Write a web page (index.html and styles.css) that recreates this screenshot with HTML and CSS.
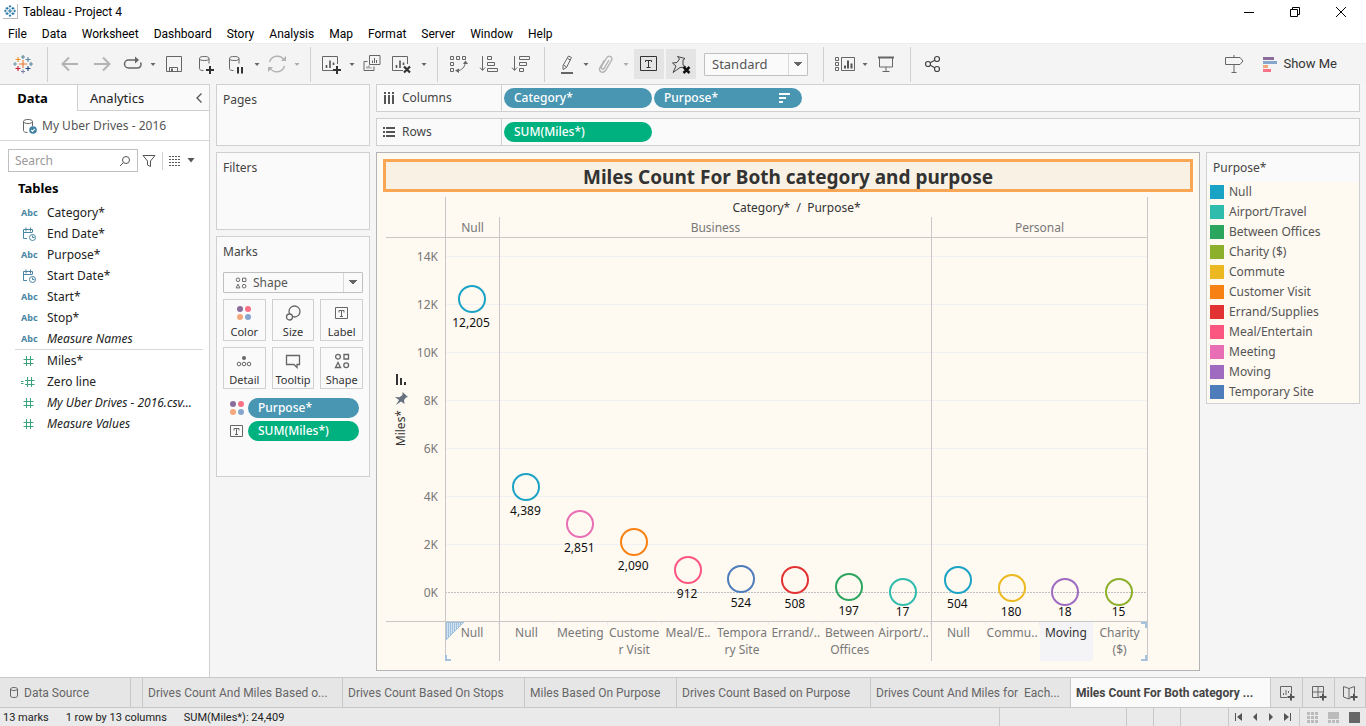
FILE: index.html
```html
<!DOCTYPE html>
<html lang="en">
<head>
<meta charset="utf-8">
<title>Tableau - Project 4</title>
<link rel="stylesheet" href="styles.css">
</head>
<body>
<svg class="defs" aria-hidden="true">
  <symbol id="i-logo" viewBox="0 0 24 24"><g fill="none" stroke-width="1.1">
    <path stroke="#e8762c" d="M12 8v8M8 12h8"/><path stroke="#59879b" d="M12 3v4M10 5h4M18 12h4M20 10v4"/><path stroke="#7099a6" d="M2 12h4M4 10v4"/>
    <path stroke="#eb912b" d="M7 5v5M4.500 7.500h5"/><path stroke="#59879b" d="M17 5v5M14.500 7.500h5"/><path stroke="#c72035" d="M7 14v5M4.500 16.500h5"/><path stroke="#1f447e" d="M17 14v5M14.500 16.500h5"/><path stroke="#7b7fa0" d="M12 17.500v4M10 19.500h4"/></g></symbol>
  <symbol id="i-logo-blue" viewBox="0 0 24 24"><path fill="none" stroke="#2e7ba8" stroke-width="2" d="M12 8v8M8 12h8M12 2v4M10 4h4M12 18v4M10 20h4M2 12h4M4 10v4M18 12h4M20 10v4M7 5v5M4.500 7.500h5M17 5v5M14.500 7.500h5M7 14v5M4.500 16.500h5M17 14v5M14.500 16.500h5"/></symbol>
  <symbol id="i-back" viewBox="0 0 24 24"><path class="faint thick" d="M19 12H4M10 5.500L3.500 12l6.500 6.500"/></symbol>
  <symbol id="i-fwd" viewBox="0 0 24 24"><path class="faint thick" d="M3 12h15M12 5.500l6.500 6.500-6.500 6.500"/></symbol>
  <symbol id="i-redo" viewBox="0 0 24 24"><path class="ln" stroke-width="1.500" d="M13 8H7.500a4 4 0 0 0 0 8h9a3.500 3.500 0 0 0 3-5.500M12 8h5"/><path fill="#666" d="M14 4.500l4 3.500-4 3.500z"/></symbol>
  <symbol id="i-caret" viewBox="0 0 12 24"><path fill="#666" d="M3.500 11h5L6 14z"/></symbol>
  <symbol id="i-save" viewBox="0 0 24 24"><path class="ln" d="M3.500 4.500h15v15h-15zM6.500 19.500v-4h8v4"/><path fill="#666" d="M8 16.500h2v3H8z"/></symbol>
  <symbol id="i-db" viewBox="0 0 24 24"><path class="ln" d="M4.500 6.500c0-1.500 2-2 4.700-2s4.800.5 4.800 2-2 2-4.800 2-4.700-.5-4.700-2zM4.500 6.500v10c0 1.500 1.500 2 4 2M14 6.500v5"/></symbol>
  <symbol id="i-newdata" viewBox="0 0 24 24"><use href="#i-db"/><path stroke="#333" stroke-width="2" d="M15 14v8M11 18h8"/></symbol>
  <symbol id="i-pause" viewBox="0 0 24 24"><use href="#i-db"/><path stroke="#333" stroke-width="2" d="M13 15v6.500M17 15v6.500"/></symbol>
  <symbol id="i-refresh" viewBox="0 0 24 24"><path class="faint" d="M4.500 10A8 8 0 0 1 19 8M19.500 14A8 8 0 0 1 5 16"/><path fill="#b3b3b3" d="M16 9h5v-5zM8 15H3v5z"/></symbol>
  <symbol id="i-sheet" viewBox="0 0 24 24"><path class="ln" d="M13 18.500H2.500v-14h15V12"/><path stroke="#555" stroke-width="1.600" d="M6.500 16v-3M10 16V8.500M13.500 13v-2.500"/></symbol>
  <symbol id="i-newsheet" viewBox="0 0 24 24"><use href="#i-sheet"/><path stroke="#333" stroke-width="2" d="M17 14v8M13 18h8"/></symbol>
  <symbol id="i-dup" viewBox="0 0 24 24"><path class="ln" d="M9.500 3.500h10.500v9H9.500zM7.500 9.500H4v9h10v-4M12.500 11V8.500M14.500 11V6M16.500 11V8M7 16.500v-2M9 16.500v-3M11 16.500v-1"/></symbol>
  <symbol id="i-clear" viewBox="0 0 24 24"><use href="#i-sheet"/><path stroke="#333" stroke-width="2.200" d="M14 14.500l6 6M20 14.500l-6 6"/></symbol>
  <symbol id="i-swap" viewBox="0 0 24 24"><path class="ln" d="M3.500 4.500h3v3h-3zM9.500 4.500h3v3h-3zM15.500 4.500h3v3h-3zM3.500 10.500h3v3h-3zM3.500 16.500h3v3h-3zM18 11c0 4-3 7-8 8"/><path fill="#666" d="M18.500 8.500l2.500 3.500h-5zM8 18.500l4-2v4.500z"/></symbol>
  <symbol id="i-asc" viewBox="0 0 24 24"><path class="ln" d="M5.500 4v14M3 15.500l2.500 3 2.500-3M10.500 4.500h4v3h-4zM10.500 10.500h7v3h-7zM10.500 16.500h10v3h-10z"/></symbol>
  <symbol id="i-desc" viewBox="0 0 24 24"><path class="ln" d="M5.500 4v14M3 15.500l2.500 3 2.500-3M10.500 4.500h10v3h-10zM10.500 10.500h7v3h-7zM10.500 16.500h4v3h-4z"/></symbol>
  <symbol id="i-pen" viewBox="0 0 24 24"><path class="ln" d="M14.500 4l3 1.500-5 10L9 17.500v-4zM9.500 13l3 2M13.500 6.500l3 1.500"/><path stroke="#666" stroke-width="2" d="M7 21h12"/></symbol>
  <symbol id="i-clip" viewBox="0 0 24 24"><path class="faint" d="M15 8l-5 8.500c-1.500 1.500-3.500 0-2.500-2l5-8.500c2-3.500 7-1 5 2.500l-6 10c-2.500 3.500-7.500 1-5.500-3l4.500-7.500"/></symbol>
  <symbol id="i-text" viewBox="0 0 24 24"><path fill="none" stroke="#333" d="M3.500 4.500h16v14h-16zM8.500 10V8.500h6V10M11.500 8v7M9.500 15.500h4"/></symbol>
  <symbol id="i-pinx" viewBox="0 0 24 24"><path fill="none" stroke="#444" d="M8.500 4.500l7.500 2-2 1.500v5l3 2-6 .5L4 20.500l3-6.500-3.500-3 4.500-.5 2.500-3.500z"/><path stroke="#111" stroke-width="2.500" d="M14.500 15l6 6M20.500 15l-6 6"/></symbol>
  <symbol id="i-cards" viewBox="0 0 24 24"><path class="ln" d="M2.500 5.500h3v3h-3zM2.500 10.500h3v3h-3zM2.500 15.500h3v3h-3zM8.500 5.500h13v13h-13z"/><path stroke="#555" stroke-width="2" d="M12 16.500v-3M15 16.500v-8M18.500 16.500v-5"/></symbol>
  <symbol id="i-present" viewBox="0 0 24 24"><path class="ln" d="M4.500 6v9h13V6M11 15v5M7.500 19.500h7"/><path stroke="#666" stroke-width="2" d="M3 5.500h16"/></symbol>
  <symbol id="i-share" viewBox="0 0 24 24"><g fill="none" stroke="#444" stroke-width="1.200"><circle cx="8" cy="12" r="2.500"/><circle cx="17" cy="7" r="2.500"/><circle cx="17" cy="17" r="2.500"/><path d="M10.200 10.800l4.500-2.500M10.200 13.200l4.500 2.500"/></g></symbol>
  <symbol id="i-sign" viewBox="0 0 24 24"><path class="ln" d="M2.500 5.500h14.500l3 3.500-3 3.500H2.500zM11 3v2.500M11 12.500v8M8.500 20.500h5"/></symbol>
  <symbol id="i-dots" viewBox="0 0 16 16"><circle cx="4" cy="4" r="3" fill="#8a6d9b"/><circle cx="12" cy="4" r="3" fill="#fa7286"/><circle cx="4" cy="12" r="3" fill="#f5a77c"/><circle cx="12" cy="12" r="3" fill="#86a6ce"/></symbol>
  <symbol id="i-shapes" viewBox="0 0 16 16"><path class="ln" stroke-width="1.300" d="M10 1.500h4.500V6H10zM4 9.500L1.500 14.500h5z"/><g class="ln" stroke-width="1.300"><circle cx="4" cy="3.700" r="2.400"/><circle cx="12.200" cy="12.200" r="2.400"/></g></symbol>
  <symbol id="i-size" viewBox="0 0 16 16"><circle class="ln" stroke-width="1.300" cx="9.500" cy="6.500" r="5.500"/><circle cx="4.500" cy="12" r="3" fill="#fafafa" stroke="#666" stroke-width="1.300"/></symbol>
  <symbol id="i-label" viewBox="0 0 16 16"><path class="ln" d="M1.500 2.500h12v11h-12zM5 7.500v-2h5v2M7.500 5.500v6M6 11.500h3"/></symbol>
  <symbol id="i-detail" viewBox="0 0 16 16"><circle cx="8" cy="5" r="2" fill="#666"/><g class="ln"><circle cx="3" cy="11" r="1.800"/><circle cx="8" cy="11" r="1.800"/><circle cx="13" cy="11" r="1.800"/></g></symbol>
  <symbol id="i-tooltip" viewBox="0 0 16 16"><path class="ln" stroke-width="1.300" d="M1.500 2.500h13v9h-2.500v3l-3-3H1.500z"/></symbol>
  <symbol id="i-date" viewBox="0 0 16 16"><g fill="none" stroke="#4a86a4"><path d="M6 12.500H2.500v-9h9V6M2.500 6.500h9M5 1.500v4M9.500 1.500v4"/><circle cx="11.500" cy="11.500" r="3"/><path d="M11.500 9.500v2h2"/></g></symbol>
  <symbol id="i-hash" viewBox="0 0 16 16"><path stroke="#3da37c" d="M5.500 3v10M9.500 3v10M2.500 6.500h10M2.500 10.500h10"/></symbol>
  <symbol id="i-eqhash" viewBox="0 0 16 16"><path stroke="#3da37c" d="M6.500 3v10M10.500 3v10M4 6.500h9.500M4 10.500h9.500M0 7.500h2.500M0 9.500h2.500"/></symbol>
  <symbol id="i-plus" viewBox="0 0 16 16"><path stroke="#555" stroke-width="2" d="M12 8.500v7M8.500 12h7"/></symbol>
</svg>

<div class="app">
  <header class="titlebar">
    <span class="app-icon"><svg width="14" height="14"><use href="#i-logo-blue"/></svg></span>
    <h1>Tableau - Project 4</h1>
    <div class="window-buttons">
      <button aria-label="Minimize"><svg width="12" height="12"><path stroke="#000" d="M1 6.500h10"/></svg></button>
      <button aria-label="Restore"><svg width="12" height="12"><path fill="none" stroke="#000" d="M1.500 3.500h7v7h-7zM3.500 3.500v-2h7v7h-2"/></svg></button>
      <button aria-label="Close"><svg width="12" height="12"><path stroke="#000" d="M1 1l10 10M11 1L1 11"/></svg></button>
    </div>
  </header>
  <nav class="menubar" aria-label="Main menu">
    <button>File</button><button>Data</button><button>Worksheet</button><button>Dashboard</button><button>Story</button><button>Analysis</button><button>Map</button><button>Format</button><button>Server</button><button>Window</button><button>Help</button>
  </nav>

  <div class="toolbar" role="toolbar" aria-label="Worksheet toolbar">
    <button class="tool home" aria-label="Start page"><svg><use href="#i-logo"/></svg></button>
    <span class="rule"></span>
    <button class="tool wide" aria-label="Undo"><svg><use href="#i-back"/></svg></button>
    <button class="tool wide" aria-label="Redo"><svg><use href="#i-fwd"/></svg></button>
    <button class="tool" aria-label="Replay"><svg><use href="#i-redo"/></svg></button>
    <button class="drop" aria-label="Replay options"><svg><use href="#i-caret"/></svg></button>
    <button class="tool wide" aria-label="Save"><svg><use href="#i-save"/></svg></button>
    <button class="tool wide" aria-label="New data source"><svg><use href="#i-newdata"/></svg></button>
    <button class="tool" aria-label="Pause updates"><svg><use href="#i-pause"/></svg></button>
    <button class="drop" aria-label="Update options"><svg><use href="#i-caret"/></svg></button>
    <button class="tool" aria-label="Run update"><svg><use href="#i-refresh"/></svg></button>
    <button class="drop off" aria-label="Run options"><svg><use href="#i-caret"/></svg></button>
    <span class="rule"></span>
    <button class="tool" aria-label="New worksheet"><svg><use href="#i-newsheet"/></svg></button>
    <button class="drop" aria-label="New worksheet options"><svg><use href="#i-caret"/></svg></button>
    <button class="tool" aria-label="Duplicate"><svg><use href="#i-dup"/></svg></button>
    <button class="tool wide" aria-label="Clear sheet"><svg><use href="#i-clear"/></svg></button>
    <button class="drop" aria-label="Clear options"><svg><use href="#i-caret"/></svg></button>
    <span class="rule"></span>
    <button class="tool" aria-label="Swap rows and columns"><svg><use href="#i-swap"/></svg></button>
    <button class="tool wide" aria-label="Sort ascending"><svg><use href="#i-asc"/></svg></button>
    <button class="tool wide" aria-label="Sort descending"><svg><use href="#i-desc"/></svg></button>
    <span class="rule"></span>
    <button class="tool" aria-label="Highlight"><svg><use href="#i-pen"/></svg></button>
    <button class="drop" aria-label="Highlight options"><svg><use href="#i-caret"/></svg></button>
    <button class="tool" aria-label="Group members"><svg><use href="#i-clip"/></svg></button>
    <button class="drop off" aria-label="Group options"><svg><use href="#i-caret"/></svg></button>
    <button class="tool on" aria-label="Show mark labels"><svg><use href="#i-text"/></svg></button>
    <button class="tool on" aria-label="Fix axes"><svg><use href="#i-pinx"/></svg></button>
    <span class="picker fit"><select aria-label="Fit"><option>Standard</option></select></span>
    <span class="rule"></span>
    <button class="tool" aria-label="Show cards"><svg><use href="#i-cards"/></svg></button>
    <button class="drop" aria-label="Card options"><svg><use href="#i-caret"/></svg></button>
    <button class="tool wide" aria-label="Presentation mode"><svg><use href="#i-present"/></svg></button>
    <span class="rule"></span>
    <button class="tool" aria-label="Share"><svg><use href="#i-share"/></svg></button>
    <button class="tool wide guide" aria-label="Guide"><svg><use href="#i-sign"/></svg></button>
    <button class="show-me"><svg width="14" height="15"><path fill="#8a6d9b" d="M0 0h11v3H0z"/><path fill="#86a6ce" d="M0 4h14v3H0z"/><path fill="#f5a77c" d="M0 8h5v3H0z"/><path fill="#fa7286" d="M0 12h8v3H0z"/></svg>Show Me</button>
  </div>

  <main class="workspace">
    <aside class="data-pane">
      <div class="pane-tabs">
        <button class="pane-tab current">Data</button>
        <button class="pane-tab">Analytics</button>
        <button class="collapse" aria-label="Collapse pane"><svg width="8" height="12"><path fill="none" stroke="#555" stroke-width="1.300" d="M6.500 1.500L2 6l4.500 4.500"/></svg></button>
      </div>
      <a class="source" href="#source">
        <svg width="16" height="16" viewBox="0 0 16 16"><path class="ln" d="M1.500 3.500c0-1.300 2-2 4.500-2s4.500.7 4.500 2-2 2-4.500 2-4.500-.7-4.500-2zM1.500 3.500v9c0 1.300 1.500 2 4 2M10.500 3.500V8"/><circle cx="11" cy="12" r="3.800" fill="#3c7fa3"/><path fill="none" stroke="#fff" stroke-width="1.200" d="M9.200 12l1.300 1.400 2.300-2.600"/></svg>
        My Uber Drives - 2016</a>
      <div class="search-row">
        <label class="search"><input type="text" placeholder="Search" aria-label="Search fields"><svg width="12" height="12"><g fill="none" stroke="#555"><circle cx="7" cy="5" r="3.500"/><path d="M4.500 7.500L1 11"/></g></svg></label>
        <button class="mini" aria-label="Filter fields"><svg width="14" height="14"><path fill="none" stroke="#555" d="M1 1.500h12L8.500 7v5.500l-3-1.500V7z"/></svg></button>
        <span class="mini-rule"></span>
        <button class="mini" aria-label="View fields"><svg width="12" height="10"><path stroke="#555" stroke-dasharray="2 1" d="M0 .5h12M0 3.500h12M0 6.500h12M0 9.500h12"/></svg></button>
        <button class="mini" aria-label="Field options"><svg width="8" height="5"><path fill="#555" d="M.5 0h7L4 4.500z"/></svg></button>
      </div>
      <h2>Tables</h2>
      <ul class="fields dimensions">
        <li><span class="abc">Abc</span>Category*</li>
        <li><svg><use href="#i-date"/></svg>End Date*</li>
        <li><span class="abc">Abc</span>Purpose*</li>
        <li><svg><use href="#i-date"/></svg>Start Date*</li>
        <li><span class="abc">Abc</span>Start*</li>
        <li><span class="abc">Abc</span>Stop*</li>
        <li><span class="abc">Abc</span><em>Measure Names</em></li>
      </ul>
      <ul class="fields">
        <li><svg><use href="#i-hash"/></svg>Miles*</li>
        <li><svg><use href="#i-eqhash"/></svg>Zero line</li>
        <li><svg><use href="#i-hash"/></svg><em>My Uber Drives - 2016.csv...</em></li>
        <li><svg><use href="#i-hash"/></svg><em>Measure Values</em></li>
      </ul>
    </aside>

    <div class="cards">
      <section class="card pages"><h3>Pages</h3></section>
      <section class="card filters"><h3>Filters</h3></section>
      <section class="card marks">
        <h3>Marks</h3>
        <div class="picker mark-type"><svg width="12" height="12"><use href="#i-shapes"/></svg><select aria-label="Mark type"><option>Shape</option></select></div>
        <div class="mark-buttons">
          <button><svg><use href="#i-dots"/></svg>Color</button>
          <button><svg><use href="#i-size"/></svg>Size</button>
          <button><svg><use href="#i-label"/></svg>Label</button>
          <button><svg><use href="#i-detail"/></svg>Detail</button>
          <button><svg><use href="#i-tooltip"/></svg>Tooltip</button>
          <button><svg><use href="#i-shapes"/></svg>Shape</button>
        </div>
        <div class="encoding"><svg><use href="#i-dots"/></svg><button class="pill blue">Purpose*</button></div>
        <div class="encoding"><svg><use href="#i-label"/></svg><button class="pill green">SUM(Miles*)</button></div>
      </section>
    </div>

    <div class="sheet">
      <div class="shelf">
        <div class="shelf-name"><svg width="12" height="12"><path stroke="#555" stroke-width="2" d="M2 0v2M6 0v2M10 0v2M2 3v9M6 3v9M10 3v9"/></svg>Columns</div>
        <button class="pill blue">Category*</button>
        <button class="pill blue">Purpose*<svg width="11" height="10"><path fill="#fff" d="M0 0h11v2H0zM0 4h7v2H0zM0 8h4v2H0z"/></svg></button>
      </div>
      <div class="shelf">
        <div class="shelf-name"><svg width="12" height="12"><path stroke="#555" stroke-width="2" d="M0 2h2M0 6h2M0 10h2M3 2h9M3 6h9M3 10h9"/></svg>Rows</div>
        <button class="pill green">SUM(Miles*)</button>
      </div>
      <div class="view-row">
        <section class="viz">
          <h2 class="viz-title">Miles Count For Both category and purpose</h2>
          <div class="chart">
            <div class="field-title">Category* &nbsp;/&nbsp; Purpose*</div>
            <div class="head corner"></div>
            <div class="head g1">Null</div>
            <div class="head g2">Business</div>
            <div class="head g3">Personal</div>
            <div class="axis">
              <span class="tick" style="--v:14000">14K</span><span class="tick" style="--v:12000">12K</span><span class="tick" style="--v:10000">10K</span><span class="tick" style="--v:8000">8K</span><span class="tick" style="--v:6000">6K</span><span class="tick" style="--v:4000">4K</span><span class="tick" style="--v:2000">2K</span><span class="tick" style="--v:0">0K</span>
              <div class="axis-title">
                <div class="axis-icons">
                  <svg width="12" height="11"><path fill="#333" d="M1 0h2v11H1zM5 4h2v7H5zM9 8h2v3H9z"/></svg>
                  <svg width="13" height="13"><path fill="#66707e" d="M7.500 0L13 5l-2 .5L9 8l.5 4L6 9.500 1 13l3-5L0 5l4.500.3L7.500 3z"/></svg>
                </div>
                <span class="axis-name">Miles*</span>
              </div>
            </div>
            <div class="gridlines"><i style="--v:14000"></i><i style="--v:12000"></i><i style="--v:10000"></i><i style="--v:8000"></i><i style="--v:6000"></i><i style="--v:4000"></i><i style="--v:2000"></i><i class="zero" style="--v:0"></i></div>
            <div class="pane g1">
              <div class="col null" style="--v:12205"><b></b><span>12,205</span></div>
            </div>
            <div class="pane g2">
              <div class="col null" style="--v:4389"><b></b><span>4,389</span></div>
              <div class="col meeting" style="--v:2851"><b></b><span>2,851</span></div>
              <div class="col customer" style="--v:2090"><b></b><span>2,090</span></div>
              <div class="col meal" style="--v:912"><b></b><span>912</span></div>
              <div class="col temporary" style="--v:524"><b></b><span>524</span></div>
              <div class="col errand" style="--v:508"><b></b><span>508</span></div>
              <div class="col between" style="--v:197"><b></b><span>197</span></div>
              <div class="col airport" style="--v:17"><b></b><span>17</span></div>
            </div>
            <div class="pane g3">
              <div class="col null" style="--v:504"><b></b><span>504</span></div>
              <div class="col commute" style="--v:180"><b></b><span>180</span></div>
              <div class="col moving" style="--v:18"><b></b><span>18</span></div>
              <div class="col charity" style="--v:15"><b></b><span>15</span></div>
            </div>
            <div class="foot corner"></div>
            <div class="foot g1"><span>Null</span><svg class="hatch" width="18" height="18"><path fill="#d3e3f0" d="M0 0h18L0 18z"/><path stroke="#9fc1dd" stroke-width="1" d="M.5 0v18M2.500 0v16M4.500 0v14M6.500 0v12M8.500 0v10M10.500 0v8M12.500 0v6M14.500 0v4M16.500 0v2M0 .5h18M18 0L0 18"/></svg><i class="mark-corner bl"></i></div>
            <div class="foot g2"><span>Null</span><span>Meeting</span><span>Custome<br>r Visit</span><span>Meal/E..</span><span>Tempora<br>ry Site</span><span>Errand/..</span><span>Between<br>Offices</span><span>Airport/..</span></div>
            <div class="foot g3"><span>Null</span><span>Commu..</span><span class="hover">Moving</span><span>Charity<br>($)</span><i class="mark-corner tr"></i><i class="mark-corner br"></i></div>
          </div>
        </section>
        <aside class="legend">
          <h3>Purpose*</h3>
          <ul>
            <li class="null">Null</li><li class="airport">Airport/Travel</li><li class="between">Between Offices</li><li class="charity">Charity ($)</li><li class="commute">Commute</li><li class="customer">Customer Visit</li><li class="errand">Errand/Supplies</li><li class="meal">Meal/Entertain</li><li class="meeting">Meeting</li><li class="moving">Moving</li><li class="temporary">Temporary Site</li>
          </ul>
        </aside>
      </div>
    </div>
  </main>

  <nav class="sheet-tabs" aria-label="Sheets">
    <button class="source-tab"><svg width="10" height="13"><path class="ln" d="M1.500 3c0-2 7-2 7 0v7c0 2-7 2-7 0zM1.500 3c0 2 7 2 7 0"/></svg>Data Source</button>
    <span></span>
    <button>Drives Count And Miles Based o...</button>
    <button>Drives Count Based On Stops</button>
    <button>Miles Based On Purpose</button>
    <button>Drives Count Based on Purpose</button>
    <button>Drives Count And Miles for&nbsp; Each...</button>
    <button class="current">Miles Count For Both category ...</button>
    <button class="add" aria-label="New worksheet"><svg width="16" height="16"><path class="ln" d="M8 12.500H1.500v-11h11V8M4.500 10V8M7 10V5M9.500 8V6"/><use href="#i-plus"/></svg></button>
    <button class="add" aria-label="New dashboard"><svg width="16" height="16"><path class="ln" d="M8 12.500H1.500v-11h11V8M1.500 7h11M7 1.500v11"/><use href="#i-plus"/></svg></button>
    <button class="add" aria-label="New story"><svg width="16" height="16"><path class="ln" d="M9 12.500L7 14l-5.500-2V1.500L7 3.500l5.500-2V8M7 3.500V14"/><use href="#i-plus"/></svg></button>
  </nav>
  <footer class="status">
    <span>13 marks</span><span>1 row by 13 columns</span><span>SUM(Miles*): 24,409</span>
    <i class="cell c127"></i><i class="cell c27"></i><i class="cell c27"></i><i class="cell c48"></i>
    <div class="cell pager">
      <button aria-label="First"><svg width="8" height="8"><path fill="#555" d="M0 0h1v8H0zM7 0v8L2 4z"/></svg></button>
      <button aria-label="Previous"><svg width="8" height="8"><path fill="#555" d="M6 0v8L2 4z"/></svg></button>
      <button aria-label="Next"><svg width="8" height="8"><path fill="#555" d="M2 0v8l4-4z"/></svg></button>
      <button aria-label="Last"><svg width="8" height="8"><path fill="#555" d="M7 0h1v8H7zM1 0v8l5-4z"/></svg></button>
    </div>
    <div class="cell layouts">
      <button aria-label="Sheet sorter"><svg width="11" height="11"><path fill="#bbb" d="M0 0h3v3H0zM4 0h3v3H4zM8 0h3v3H8zM0 4h3v3H0zM4 4h3v3H4zM8 4h3v3H8zM0 8h3v3H0zM4 8h3v3H4zM8 8h3v3H8z"/></svg></button>
      <button aria-label="Filmstrip"><svg width="11" height="11"><path fill="#bbb" d="M0 0h11v7H0zM0 8h3v3H0zM4 8h3v3H4zM8 8h3v3H8z"/></svg></button>
      <button aria-label="Tabs"><svg width="11" height="11"><path fill="#666" d="M0 0h11v11H0z"/></svg></button>
    </div>
  </footer>
</div>
</body>
</html>
```
FILE: styles.css
```css
* { box-sizing: border-box; }
body { margin: 0; font: 12px/16px "Noto Sans", "Open Sans", sans-serif; color: #333; background: #f5f5f5; }
h1, h2, h3, ul { margin: 0; padding: 0; font-weight: 400; font-size: 12px; list-style: none; }
button { margin: 0; padding: 0; border: 0; background: none; font: inherit; color: inherit; }
svg { display: block; flex: none; }
.defs { position: absolute; width: 0; height: 0; }
.ln { fill: none; stroke: #666; }
.faint { fill: none; stroke: #b3b3b3; stroke-width: 1.4; }
.faint.thick { stroke-width: 2; }

/* category palette */
.null { --c: #1ba3c6; }
.airport { --c: #30bcad; }
.between { --c: #2ca65f; }
.charity { --c: #8cb02c; }
.commute { --c: #edb922; }
.customer { --c: #f88113; }
.errand { --c: #e33233; }
.meal { --c: #fb567f; }
.meeting { --c: #e86fb5; }
.moving { --c: #9f6bc1; }
.temporary { --c: #4f7cba; }

.app { display: flex; flex-direction: column; min-height: 100vh; }
.titlebar { display: flex; align-items: center; height: 23px; padding: 0 2px 0 3px; background: #fff; color: #000; gap: 5px; }
.titlebar h1 { flex: 1; font-family: Roboto, sans-serif; }
.app-icon { border: solid #bbb; border-width: 0 1px 1px 0; }
.window-buttons { display: flex; }
.window-buttons button { width: 46px; height: 20px; display: grid; place-items: center; }
.menubar { display: flex; gap: 15px; height: 20px; padding: 3px 8px 1px; background: #fff; font-family: Roboto, sans-serif; color: #000; }

.toolbar { display: flex; align-items: center; height: 41px; border-top: 1px solid #ededed; background: #f4f4f4; }
.tool { display: grid; place-items: center; width: 28px; height: 30px; }
.tool.wide { width: 32px; }
.tool.home { width: 40px; padding-left: 6px; }
.tool.on { width: 30px; background: #e4e4e4; margin-left: 2px; }
.tool svg { width: 24px; height: 24px; }
.drop svg { width: 12px; height: 24px; }
.drop.off { opacity: .5; }
.rule { width: 1px; height: 35px; margin: 0 7px; background: #d0d0d0; }
.guide { margin-left: auto; }
.show-me { display: flex; align-items: center; gap: 6px; margin: 0 29px 0 12px; font: 13px/18px Roboto, sans-serif; }
.picker { display: flex; align-items: center; border: 1px solid #c0c0c0; border-radius: 1px; background: #fafafa; }
.picker select { flex: 1; width: 100%; height: 100%; border: 0; background: none; appearance: none; font: inherit; color: #555; outline: 0; }
.picker::after { content: ""; width: 18px; align-self: stretch; border-left: 1px solid #d8d8d8; background: conic-gradient(from -39deg at 50% 100%, #666 78deg, transparent 0) center / 8px 5px no-repeat; }
.fit { width: 104px; height: 23px; margin: 0 8px; font: 13px/18px "Noto Sans", sans-serif; }
.fit select { padding: 0 0 0 7px; }

.workspace { flex: 1; display: flex; gap: 6px; padding-right: 6px; }

.data-pane { width: 210px; border: solid #d0d0d0; border-width: 1px 1px 0 0; background: #fff; color: #222; }
.pane-tabs { display: flex; height: 26px; font-size: 13px; }
.pane-tab { padding: 0 12px; border-bottom: 1px solid #d0d0d0; background: #fafafa; color: #222; }
.pane-tab.current { width: 78px; padding: 0 12px 0 0; border-right: 1px solid #d0d0d0; border-bottom: 0; background: #fff; font-weight: 700; color: #000; }
.collapse { flex: 1; display: flex; justify-content: flex-end; align-items: center; padding-right: 6px; border-bottom: 1px solid #d0d0d0; background: #fafafa; }
.source { display: flex; align-items: center; gap: 4px; height: 30px; padding-left: 22px; border-bottom: 1px solid #d8d8d8; color: #555; text-decoration: none; }
.search-row { display: flex; align-items: center; gap: 4px; margin: 8px 8px 0; }
.search { flex: none; display: flex; align-items: center; width: 130px; height: 23px; padding: 0 6px; border: 1px solid #c0c0c0; }
.search input { flex: 1; width: 0; border: 0; padding: 0; outline: 0; font: inherit; background: none; }
.search input::placeholder { color: #999; }
.mini-rule { width: 1px; height: 18px; background: #d0d0d0; margin-right: 2px; }
.mini { margin-right: 2px; }
.data-pane h2 { margin: 8px 0 6px 18px; font-weight: 700; font-size: 13px; color: #000; }
.fields { padding: 0 0 0 21px; }
.dimensions::after { content: ""; display: block; height: 1px; margin: 0 6px 0 -6px; background: #d8d8d8; }
.fields li { display: flex; align-items: center; height: 21px; white-space: nowrap; }
.fields svg { width: 16px; height: 16px; margin-right: 10px; }
.abc { width: 26px; font: 700 9px/12px "Noto Sans", sans-serif; color: #4a86a4; }

.cards { display: flex; flex-direction: column; gap: 6px; width: 154px; }
.card { border: 1px solid #d0d0d0; background: #fafafa; padding: 7px 6px; }
.card h3 { color: #444; }
.pages { height: 62px; }
.filters { height: 78px; }
.marks { height: 241px; }
.mark-type { height: 21px; margin: 12px 0 6px; padding-left: 11px; font-size: 12px; }
.mark-type select { padding: 0 0 0 6px; }
.mark-buttons { display: grid; grid-template-columns: repeat(3, 1fr); gap: 6px; margin-bottom: 9px; }
.mark-buttons button { display: flex; flex-direction: column; align-items: center; gap: 3px; height: 42px; padding-top: 5px; border: 1px solid #d0d0d0; font-size: 11px; line-height: 15px; }
.mark-buttons svg, .encoding svg { width: 16px; height: 16px; }
.encoding { display: flex; align-items: center; gap: 3px; padding: 0 4px 0 6px; margin-bottom: 3px; }
.encoding .pill { flex: 1; }
.pill { display: flex; align-items: center; justify-content: space-between; height: 20px; padding: 0 12px 0 10px; border-radius: 10px; color: #fff; font-weight: 500; }
.blue { background: #4996b2; }
.green { background: #00b180; }

.sheet { flex: 1; display: flex; flex-direction: column; gap: 6px; min-width: 0; }
.shelf { display: flex; align-items: center; gap: 2px; height: 28px; border: 1px solid #d0d0d0; background: #fafafa; }
.shelf-name { display: flex; align-items: center; gap: 7px; align-self: stretch; width: 125px; padding-left: 6px; border-right: 1px solid #d0d0d0; color: #444; }
.shelf .pill { width: 148px; }
.view-row { flex: 1; display: flex; align-items: flex-start; gap: 6px; margin-bottom: 6px; }
.viz { flex: 1; align-self: stretch; display: flex; flex-direction: column; padding: 6px 6px 9px 6px; border: 1px solid #b4b4b4; background: #fef9f1; }
.viz-title { padding: 4px 0 0; border: 3px solid #faa755; background: #f9f2e4; text-align: center; font: 700 19px/23px "Noto Sans", sans-serif; color: #333; }

.chart { flex: 1; display: grid; grid-template: 20px 21px minmax(300px, 1fr) 40px / 59px minmax(0, 54fr) minmax(0, 432fr) minmax(0, 217fr); margin: 5px 45px 0 3px; font-size: 12px; color: #787878; }
.field-title { grid-area: 1 / 2 / 2 / 5; border: solid #c8c8c8; border-width: 0 1px; text-align: center; line-height: 22px; color: #333; }
.corner { grid-column: 1; }
.g1 { grid-column: 2; }
.g2 { grid-column: 3; }
.g3 { grid-column: 4; border-right: 1px solid #c8c8c8; }
.g1, .g2, .g3 { border-left: 1px solid #c8c8c8; }
.head { grid-row: 2; border-bottom: 1px solid #c8c8c8; text-align: center; line-height: 21px; }
.axis, .gridlines, .pane { grid-row: 3; position: relative; }
.axis { grid-column: 1; }
.gridlines { grid-column: 2 / 5; }
/* 24 of 383 plot units per thousand miles, baseline at 28 */
.tick, .gridlines i, .col b, .col span { position: absolute; --y: calc((28 + var(--v) * 0.024) * 100% / 383); }
.tick { right: 7px; bottom: calc(var(--y) - 8px); }
.gridlines i { left: 0; right: 0; bottom: var(--y); border-top: 1px solid #f1f1f4; }
.gridlines .zero { height: 1px; border: 0; background: repeating-linear-gradient(90deg, #c0c0c0 0 2px, transparent 2px 3px); }
.axis-title { height: 100%; width: 30px; padding-bottom: 8px; display: flex; flex-direction: column; align-items: center; }
.axis-icons { flex: 1; display: flex; flex-direction: column; justify-content: flex-end; align-items: center; gap: 7px; padding-bottom: 5px; }
.axis-title::after { content: ""; flex: 1; }
.axis-name { writing-mode: vertical-rl; rotate: 180deg; color: #333; }
.pane, .foot { display: grid; grid-auto-flow: column; grid-auto-columns: minmax(0, 1fr); }
.col { position: relative; }
.col b { left: calc(50% - 15px); bottom: calc(var(--y) - 13px); width: 28px; height: 28px; border: 2px solid var(--c); border-radius: 50%; }
.col span { left: 0; right: 3px; bottom: max(var(--y) - 31px, 1px); text-align: center; color: #111; }
.foot { grid-row: 4; position: relative; border-top: 1px solid #c8c8c8; text-align: center; line-height: 17px; white-space: nowrap; }
.foot span { padding: 2px 1px 0 0; background: linear-gradient(#ececec, #ececec) right top / 1px 3px no-repeat; }
.foot .hover { background: #f4f4f6; color: #333; }
.hatch { position: absolute; left: 0; top: 0; }
.mark-corner { position: absolute; width: 6px; height: 6px; border: 0 solid #a3c3de; }
.bl { left: -1px; bottom: 0; border-width: 0 0 2px 2px; }
.tr { right: 0; top: 0; border-width: 2px 2px 0 0; }
.br { right: 0; bottom: 0; border-width: 0 2px 2px 0; }

.legend { width: 154px; border: 1px solid #d0d0d0; background: #fafafa; }
.legend h3 { padding: 7px 6px 6px; color: #444; }
.legend ul { background: #fef9f1; padding: 0 3px 1px; }
.legend li { display: flex; align-items: center; gap: 5px; height: 20px; color: #555; }
.legend li::before { content: ""; width: 14px; height: 14px; background: var(--c); }

.sheet-tabs { display: grid; grid-template-columns: 131px 12px 200fr 182fr 152fr 194fr 200fr 200fr 32px 32px 31px; height: 31px; border: solid #c8c8c8; border-width: 1px 0; background: #e6e6e6; font: 12px/16px Roboto, sans-serif; color: #666; }
.sheet-tabs > * { border-right: 1px solid #c8c8c8; padding-left: 5px; text-align: left; white-space: nowrap; overflow: hidden; }
.sheet-tabs .current { background: #fafafa; color: #444; font-weight: 700; }
.sheet-tabs .source-tab { display: flex; align-items: center; gap: 5px; padding-left: 9px; }
.sheet-tabs .add { display: grid; place-items: center; padding: 0; }
.status { display: flex; align-items: center; gap: 17px; height: 18px; padding-left: 3px; background: #eaeaea; font: 11px/16px Roboto, sans-serif; color: #222; }
.status span { padding-top: 2px; }
.status .cell { align-self: stretch; border-left: 1px solid #c8c8c8; margin-left: -17px; }
.status .c127 { width: 127px; margin-left: auto; }
.status .c27 { width: 27px; }
.status .c48 { width: 48px; }
.pager, .layouts { display: flex; align-items: center; }
.pager { width: 71px; padding-left: 6px; gap: 8px; }
.layouts { width: 67px; padding-left: 7px; gap: 10px; }
```
